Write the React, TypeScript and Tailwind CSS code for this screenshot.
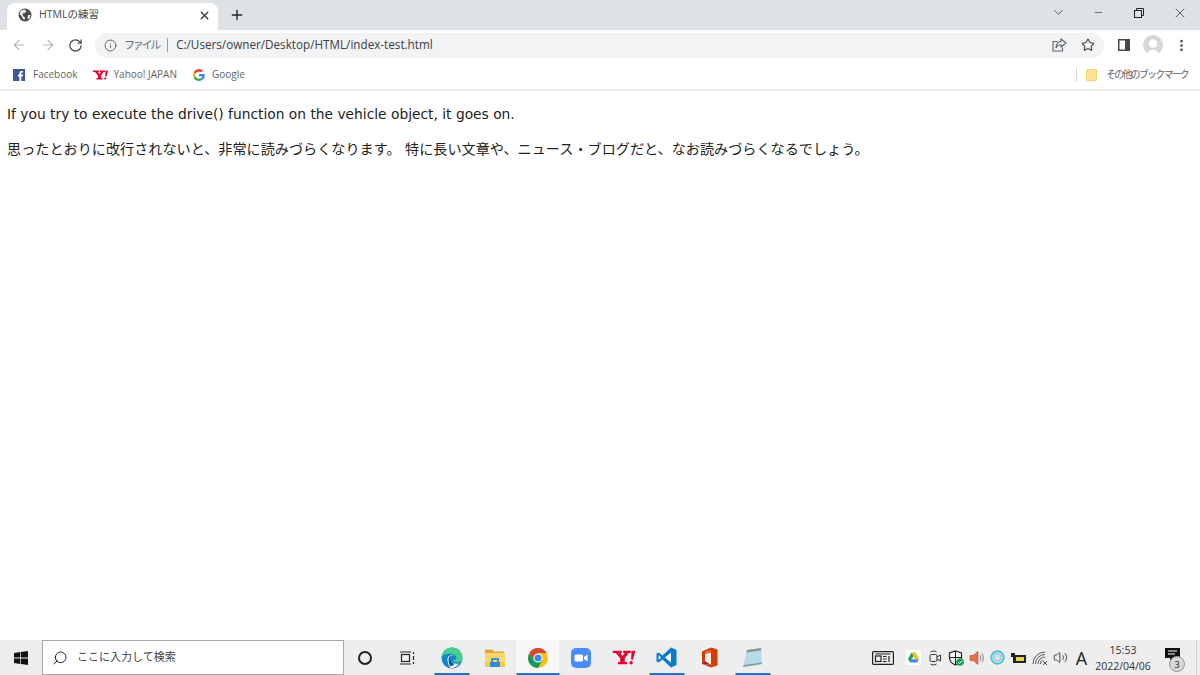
import { ArrowLeft, ArrowRight, RotateCw, Info, Star, X, Plus, ChevronDown, Minus, EllipsisVertical, Search, Volume2 } from "lucide-react";

const ui = "font-['Open_Sans','Noto_Sans_CJK_JP',sans-serif]";

function Globe() {
  return (
    <svg width="14" height="14" viewBox="0 0 14 14">
      <circle cx="7" cy="7" r="6.5" fill="#45494d" />
      <path d="M3 2.5 L6.5 1.5 L8.5 3 L7 5 L4.5 5.5 L5 8 L7 9.5 L6.5 12 L5 11 L3.5 8 L1.5 6 Z" fill="#fff" opacity="0.9" />
      <path d="M10 7 L12.5 7 L11.5 10.5 L9.5 11 Z" fill="#fff" opacity="0.9" />
    </svg>
  );
}

function Restore() {
  return (
    <svg width="10" height="10" viewBox="0 0 10 10" fill="none" stroke="#222" strokeWidth="1">
      <rect x="0.5" y="2.5" width="7" height="7" />
      <path d="M2.5 2.5 V0.5 H9.5 V7.5 H7.5" />
    </svg>
  );
}

function Share() {
  return (
    <svg width="15" height="14" viewBox="0 0 15 14" fill="none" stroke="#5f6368" strokeWidth="1.1">
      <path d="M5.5 3.5 H1 V13 H10.5 V9.5" />
      <path d="M9 1 L14 5 L9 9 V6.7 C6.5 6.7 5 7.8 4 10 C4.2 6.5 6 3.7 9 3.4 Z" />
    </svg>
  );
}

function SidePanel() {
  return (
    <svg width="12" height="12" viewBox="0 0 12 12">
      <rect x="0.75" y="0.75" width="10.5" height="10.5" fill="#fff" stroke="#45494d" strokeWidth="1.5" />
      <rect x="7" y="1" width="4" height="10" fill="#45494d" />
    </svg>
  );
}

function Avatar() {
  return (
    <svg width="20" height="20" viewBox="0 0 20 20">
      <circle cx="10" cy="10" r="10" fill="#d5d7da" />
      <circle cx="10" cy="8.5" r="4.2" fill="#fff" />
      <path d="M4.5 20 C5 13 15 13 15.5 20 Z" fill="#fff" />
    </svg>
  );
}

function FacebookMark() {
  return (
    <svg width="12" height="12" viewBox="0 0 12 12">
      <rect width="12" height="12" fill="#3b5998" />
      <path d="M8.3 12 V7.4 H9.8 L10 5.6 H8.3 V4.5 C8.3 4 8.5 3.6 9.2 3.6 H10.1 V2 C9.4 1.9 7.6 1.7 6.9 2.6 C6.5 3 6.4 3.6 6.4 4.3 V5.6 H4.9 V7.4 H6.4 V12 Z" fill="#fff" />
    </svg>
  );
}

function GoogleMark() {
  return (
    <svg width="12" height="12" viewBox="0 0 48 48">
      <path fill="#EA4335" d="M24 9.5c3.5 0 6.700 1.200 9.200 3.600l6.900-6.900C35.900 2.400 30.500 0 24 0 14.600 0 6.500 5.400 2.600 13.200l8 6.200C12.500 13.700 17.800 9.500 24 9.500z" />
      <path fill="#4285F4" d="M47 24.500c0-1.600-.1-3.100-.4-4.500H24v9h12.900c-.6 3-2.200 5.500-4.700 7.200l7.700 6c4.500-4.200 7.100-10.300 7.100-17.700z" />
      <path fill="#FBBC05" d="M10.600 28.600C10.100 27.200 9.800 25.600 9.800 24s.3-3.200.8-4.600l-8-6.200C.9 16.400 0 20.100 0 24s.9 7.600 2.600 10.800l8-6.200z" />
      <path fill="#34A853" d="M24 48c6.500 0 11.900-2.100 15.900-5.800l-7.700-6c-2.200 1.500-4.900 2.300-8.200 2.300-6.200 0-11.500-4.200-13.400-9.900l-8 6.200C6.500 42.600 14.600 48 24 48z" />
    </svg>
  );
}

function YahooMark({ w = 15, h = 10 }: { w?: number; h?: number }) {
  return (
    <svg width={w} height={h} viewBox="0 0 30 20" fill="#e60033">
      <path d="M0 1 H12 V4 H10 L13 8 L16 4 H14 V1 H24 V4 H21 L16 11 V16 H19 V19 H7 V16 H10 V11 L4 4 H0 Z" />
      <path d="M25 1 H30 L27 13 H24.500 Z" />
      <circle cx="24.500" cy="17" r="2.200" />
    </svg>
  );
}

function WinLogo() {
  return (
    <svg width="14" height="14" viewBox="0 0 14 14" fill="#111">
      <path d="M0 2 L6.300 1 V6.600 H0 Z M7 0.900 L14 0 V6.600 H7 Z M0 7.400 H6.300 V13 L0 12 Z M7 7.400 H14 V14 L7 13.100 Z" />
    </svg>
  );
}

function TaskView() {
  return (
    <svg width="15" height="14" viewBox="0 0 15 14" fill="none" stroke="#222" strokeWidth="1.200">
      <path d="M0 1 H11 M0 13 H11" />
      <rect x="1.500" y="3.500" width="8" height="7" />
      <path d="M13.500 1 V3 M13.500 5 V9 M13.500 11 V13" />
    </svg>
  );
}

function Edge() {
  return (
    <svg width="22" height="22" viewBox="0 0 22 22">
      <circle cx="11" cy="11" r="10.500" fill="#1183cc" />
      <path d="M0.500 10 C2 3.500 7 0.500 11 0.500 C17 0.500 21.500 5 21.500 11 C21.500 14.500 18.500 15.800 15 15.300 C13 15 12 14.200 12 13.300 C15 13.500 16 11.500 15 9.500 C13.500 6.500 4.500 5 0.500 10 Z" fill="#42cf8f" />
      <path d="M6.500 12 C6.500 8.500 10 7.500 12.500 8.500 C9.500 8.500 9 11 10 13.500 C11 16 14 17.500 18 16.500 C16 20 12 21.500 9.500 21 C7.500 19 6.500 15.500 6.500 12 Z" fill="#fff" />
      <path d="M7.500 12.500 C7.500 9.500 9.500 8.500 11 8.500 C9.500 9.500 9.300 11.500 10 13.500 C10.800 15.500 12 16.500 13.500 17 C11.500 19 10 19.500 9 19 C8 17 7.500 15 7.500 12.500 Z" fill="#0c59a4" />
    </svg>
  );
}

function Explorer() {
  return (
    <svg width="20" height="18" viewBox="0 0 20 18">
      <path d="M0 2 C0 1 .5 .5 1.500 .5 H7 L9 2.500 H19 V6 H0 Z" fill="#e0a52c" />
      <rect y="4" width="20" height="14" rx="1" fill="#fcd86a" />
      <rect y="13" width="20" height="5" fill="#fbc94a" />
      <path d="M6 9 H14 V13 H12 V11 H8 V13 H6 Z" fill="#3d8ed6" />
      <rect x="5" y="13" width="10" height="5" fill="#2f8ae0" />
    </svg>
  );
}

function Chrome() {
  return (
    <svg width="20" height="20" viewBox="0 0 20 20">
      <circle cx="10" cy="10" r="10" fill="#fbc116" />
      <path d="M10 0 A10 10 0 0 0 1.340 5 L5.670 12.500 L10 5 H18.660 A10 10 0 0 0 10 0 Z" fill="#db4437" />
      <path d="M1.340 5 A10 10 0 0 0 10 20 L14.330 12.500 L5.670 12.500 Z" fill="#0f9d58" />
      <circle cx="10" cy="10" r="4.600" fill="#fff" />
      <circle cx="10" cy="10" r="3.500" fill="#4285f4" />
    </svg>
  );
}

function Zoom() {
  return (
    <svg width="20" height="20" viewBox="0 0 20 20">
      <rect width="20" height="20" rx="5" fill="#4a8cff" />
      <rect x="3.500" y="6.500" width="8.500" height="7" rx="1.500" fill="#fff" />
      <path d="M13 9 L16.500 6.500 V13.500 L13 11 Z" fill="#fff" />
    </svg>
  );
}

function VSCode() {
  return (
    <svg width="21" height="21" viewBox="0 0 21 21">
      <path d="M15 0.500 L20.500 3 V18 L15 20.500 L6.500 12.500 L2.500 15.500 L0.500 14.500 V6.500 L2.500 5.500 L6.500 8.500 Z" fill="#0b7ccb" />
      <path d="M15 5.500 L9 10.500 L15 15.500 Z M2.700 8 V13 L5 10.500 Z" fill="#fff" />
    </svg>
  );
}

function Office() {
  return (
    <svg width="17" height="21" viewBox="0 0 17 21">
      <path d="M10 0.500 L16.500 2.500 V18.500 L10 20.500 L1 17 L10 18 V3.500 L4 5 V14 L1 16 V4.500 Z" fill="#d83b01" />
      <path d="M4 5 L10 3.500 V6 L4 7 Z" fill="#ea6a2e" />
      <path d="M1 16 L4 14 L10 18 L1 17 Z" fill="#a4262c" />
    </svg>
  );
}

function Notepad() {
  return (
    <svg width="21" height="21" viewBox="0 0 21 21">
      <path d="M5 3 L19 1 L20 17 L1 20 Z" fill="#b6dbe6" />
      <path d="M1 20 L20 17 L20 15.500 L2 18 Z" fill="#7f9aa3" />
      <path d="M5 3 L19 1 L19.300 3.500 L4.300 5.500 Z" fill="#8a9397" />
    </svg>
  );
}

function News() {
  return (
    <svg width="22" height="14" viewBox="0 0 22 14" fill="none" stroke="#222" strokeWidth="1.200">
      <rect x="0.600" y="0.600" width="20.800" height="12.800" rx="1" />
      <rect x="3.500" y="5" width="5.500" height="5.500" />
      <path d="M3.500 3 H18.500 M11 5.500 H14.500 M11 8 H14.500 M11 10.500 H14.500 M17 5 V11" />
    </svg>
  );
}

function DriveTray() {
  return (
    <svg width="15" height="15" viewBox="0 0 15 15">
      <rect width="15" height="15" rx="2" fill="#fff" />
      <path d="M5.500 2.500 H9.500 L13 9 H9 Z" fill="#fbbc04" />
      <path d="M5.500 2.500 L7.500 6 L4 12.500 L2 9 Z" fill="#1ea362" />
      <path d="M5.500 9.200 H13 L11 12.500 H3.700 Z" fill="#4285f4" />
    </svg>
  );
}

function Meet() {
  return (
    <svg width="14" height="16" viewBox="0 0 14 16" fill="none" stroke="#333" strokeWidth="1">
      <rect x="2" y="4.500" width="7" height="7" rx="1.500" />
      <path d="M9 7 L12.500 5 V11 L9 9" />
      <path d="M2.500 2 C4 .8 7 .8 8.500 2 M2.500 14 C4 15.200 7 15.200 8.500 14" />
    </svg>
  );
}

function Shield() {
  return (
    <svg width="16" height="16" viewBox="0 0 16 16">
      <path d="M7.500 1 L13.500 3 V8 C13.500 11 11 13.500 7.500 15 C4 13.500 1.500 11 1.500 8 V3 Z" fill="#fff" stroke="#222" strokeWidth="1.200" />
      <path d="M7.500 1 V15 M1.500 7.500 H13.500" stroke="#222" strokeWidth="1" />
      <circle cx="12" cy="12" r="3.800" fill="#14a44d" />
      <path d="M10 12 L11.500 13.500 L14 10.800" fill="none" stroke="#fff" strokeWidth="1" />
    </svg>
  );
}

function Speaker() {
  return (
    <svg width="16" height="16" viewBox="0 0 16 16">
      <path d="M1 5.500 H4 L9 1.500 V14.500 L4 10.500 H1 Z" fill="#e2734c" stroke="#a84a2e" strokeWidth="0.600" />
      <path d="M11 5 C12 6.500 12 9.500 11 11 M13 3.500 C14.800 6 14.800 10 13 12.500" fill="none" stroke="#888" strokeWidth="1" />
    </svg>
  );
}

function Ring() {
  return (
    <svg width="15" height="15" viewBox="0 0 15 15" fill="none">
      <circle cx="7.500" cy="7.500" r="6.200" stroke="#41c4d8" strokeWidth="2" />
      <circle cx="7.500" cy="7.500" r="3.800" fill="#c8e8ee" stroke="#8a9ca3" strokeWidth="0.800" />
    </svg>
  );
}

function Battery() {
  return (
    <svg width="15" height="10" viewBox="0 0 15 10">
      <rect x="2" y="2" width="13" height="8" fill="#222" />
      <rect x="0" y="0" width="4" height="4" fill="#222" />
      <rect x="5" y="4" width="8" height="4" fill="#e8d25a" />
    </svg>
  );
}

function WifiFan() {
  return (
    <svg width="16" height="14" viewBox="0 0 16 14" fill="none" stroke="#555" strokeWidth="1">
      <path d="M1 13 A12 12 0 0 1 13 1 M3.500 13 A9.500 9.500 0 0 1 13 3.500 M6 13 A7 7 0 0 1 13 6 M8.500 13 A4.500 4.500 0 0 1 10.500 9" />
      <path d="M11 10 L15 14 M15 10 L11 14" />
    </svg>
  );
}

function Tray({ w, children }: { w: number; children: React.ReactNode }) {
  return (
    <div style={{ width: w }} className="flex h-full shrink-0 items-center justify-center">
      {children}
    </div>
  );
}

function TaskApp({ line, active, children }: { line?: boolean; active?: boolean; children: React.ReactNode }) {
  return (
    <div className={`relative flex h-full w-[43px] items-center justify-center ${active ? "bg-[#f7f7f7]" : ""}`}>
      {children}
      {line && <span className={`absolute bottom-0 left-1/2 h-[2px] -translate-x-1/2 bg-[#0f7ad5] ${active ? "w-[43px]" : "w-[35px]"}`} />}
    </div>
  );
}

export default function App() {
  return (
    <div className={`flex h-[675px] w-[1200px] flex-col overflow-hidden bg-white ${ui}`}>
      {/* tab strip */}
      <div className="flex h-[30px] items-end bg-[#dee1e6] pl-[7px]">
        <div className="flex h-[27px] w-[211px] items-center rounded-t-lg bg-white pb-[3px] pl-[11px] pr-[7px]">
          <Globe />
          <span className="ml-[7px] text-[10.500px] text-[#45494d]">HTMLの練習</span>
          <X size={13} strokeWidth={2.5} className="ml-auto text-[#3c4043]" />
        </div>
        <div className="flex h-[27px] w-[38px] items-center justify-center pb-[3px]">
          <Plus size={16} strokeWidth={2} className="text-[#222]" />
        </div>
        <div className="ml-auto flex h-[25px] items-center self-start">
          <ChevronDown size={15} strokeWidth={1.300} className="mr-[27px] text-[#3c4043]" />
          <Minus size={11} strokeWidth={1.300} className="mr-[30px] text-[#222]" />
          <Restore />
          <X size={16} strokeWidth={1} className="ml-[28px] mr-[12px] text-[#222]" />
        </div>
      </div>

      {/* toolbar */}
      <div className="flex h-[30px] items-center pl-[11px] pr-[11px]">
        <ArrowLeft size={16} strokeWidth={1.800} className="text-[#b4b6b9]" />
        <ArrowRight size={16} strokeWidth={1.800} className="ml-[13px] text-[#b4b6b9]" />
        <RotateCw size={15} strokeWidth={2} className="ml-[12px] text-[#45494d]" />
        <div className="ml-[12px] flex h-[25px] w-[1010px] items-center rounded-full bg-[#f1f3f4] pl-[9px] pr-[9px]">
          <Info size={13} strokeWidth={1.800} className="text-[#5f6368]" />
          <span className="ml-[7px] text-[11px] tracking-[-2.200px] text-[#6b6f73]">ファイル</span>
          <span className="ml-[8px] h-[14px] w-px bg-[#9a9da0]" />
          <span className="ml-[8px] text-[11.700px] text-[#3c4043]">C:/Users/owner/Desktop/HTML/index-test.html</span>
          <div className="ml-auto flex items-center gap-[14px]">
            <Share />
            <Star size={14} strokeWidth={1.800} className="text-[#3c4043]" />
          </div>
        </div>
        <div className="ml-[14px]"><SidePanel /></div>
        <div className="ml-[13px]"><Avatar /></div>
        <EllipsisVertical size={15} strokeWidth={2.200} className="ml-[11px] text-[#45494d]" />
      </div>

      {/* bookmarks */}
      <div className="flex h-[29px] items-center pl-[13px] pr-[12px] text-[10px] text-[#5f6368]">
        <FacebookMark />
        <span className="ml-[8px]">Facebook</span>
        <div className="ml-[15px]"><YahooMark /></div>
        <span className="ml-[6px]">Yahoo! JAPAN</span>
        <div className="ml-[16px]"><GoogleMark /></div>
        <span className="ml-[7px]">Google</span>
        <div className="ml-auto flex items-center">
          <span className="h-[14px] w-px bg-[#d5d7da]" />
          <span className="ml-[9px] h-[12px] w-[11px] rounded-[1px] border border-[#f0d474] bg-[#fde293]" />
          <span className="ml-[9px] text-[10px] tracking-[-1.800px]">その他のブックマーク</span>
        </div>
      </div>
      <div className="h-[2px] bg-[#ececec]" />

      {/* page */}
      <main className="flex-1 pl-[7px] pt-[13px] font-['DejaVu_Sans','Noto_Sans_CJK_JP',sans-serif] text-[#222]">
        <p className="text-[13.800px] leading-[20px]">If you try to execute the drive() function on the vehicle object, it goes on.</p>
        <p className="mt-[15px] text-[14.130px] leading-[20px]">思ったとおりに改行されないと、非常に読みづらくなります。 特に長い文章や、ニュース・ブログだと、なお読みづらくなるでしょう。</p>
      </main>

      {/* taskbar */}
      <div className="flex h-[35px] items-stretch bg-[#eeeeee]">
        <div className="flex w-[42px] items-center justify-center"><WinLogo /></div>
        <div className="flex w-[302px] items-center border border-[#a8a8a8] bg-white pl-[9px] text-[11px] text-[#3f3f3f]">
          <Search size={16} strokeWidth={1.500} className="-scale-x-100 text-[#222]" />
          <span className="ml-[9px]">ここに入力して検索</span>
        </div>
        <div className="flex w-[42px] items-center justify-center">
          <span className="h-[14px] w-[14px] rounded-full border-[2px] border-[#222]" />
        </div>
        <div className="flex w-[42px] items-center justify-center"><TaskView /></div>
        <div className="ml-[2px] flex h-full">
          <TaskApp line><Edge /></TaskApp>
          <TaskApp><Explorer /></TaskApp>
          <TaskApp line active><Chrome /></TaskApp>
          <TaskApp><Zoom /></TaskApp>
          <TaskApp><YahooMark w={24} h={15} /></TaskApp>
          <TaskApp line><VSCode /></TaskApp>
          <TaskApp><Office /></TaskApp>
          <TaskApp line><Notepad /></TaskApp>
        </div>
        <div className="ml-auto flex h-full items-center">
          <Tray w={28}><News /></Tray>
          <div className="ml-[6px] flex h-full items-center">
            <Tray w={21}><DriveTray /></Tray>
            <Tray w={21}><Meet /></Tray>
            <Tray w={21}><Shield /></Tray>
            <Tray w={21}><Speaker /></Tray>
            <Tray w={21}><Ring /></Tray>
            <Tray w={21}><Battery /></Tray>
            <Tray w={21}><WifiFan /></Tray>
            <Tray w={21}><Volume2 size={15} strokeWidth={1.300} className="text-[#222]" /></Tray>
            <Tray w={21}><span className="text-[18px] leading-none text-[#222]">A</span></Tray>
          </div>
          <div className="flex w-[62px] flex-col items-center text-[10.500px] leading-[16px] text-[#333]">
            <span>15:53</span>
            <span>2022/04/06</span>
          </div>
          <div className="relative flex h-full w-[42px] items-center justify-center">
            <svg width="15" height="14" viewBox="0 0 15 14" className="-mt-[5px] -ml-[5px]">
              <path d="M0 0 H15 V10 H8 L5 13 V10 H0 Z" fill="#111" />
              <path d="M3 3 H12 M3 6 H10" stroke="#fff" strokeWidth="1" />
            </svg>
            <span className="absolute left-[15px] top-[16px] flex h-[16px] w-[16px] items-center justify-center rounded-full border border-[#999] bg-[#d8d8d8] text-[9px] leading-none text-[#222]">3</span>
          </div>
          <div className="h-full w-[4px] border-l border-[#cfcfcf]" />
        </div>
      </div>
    </div>
  );
}
